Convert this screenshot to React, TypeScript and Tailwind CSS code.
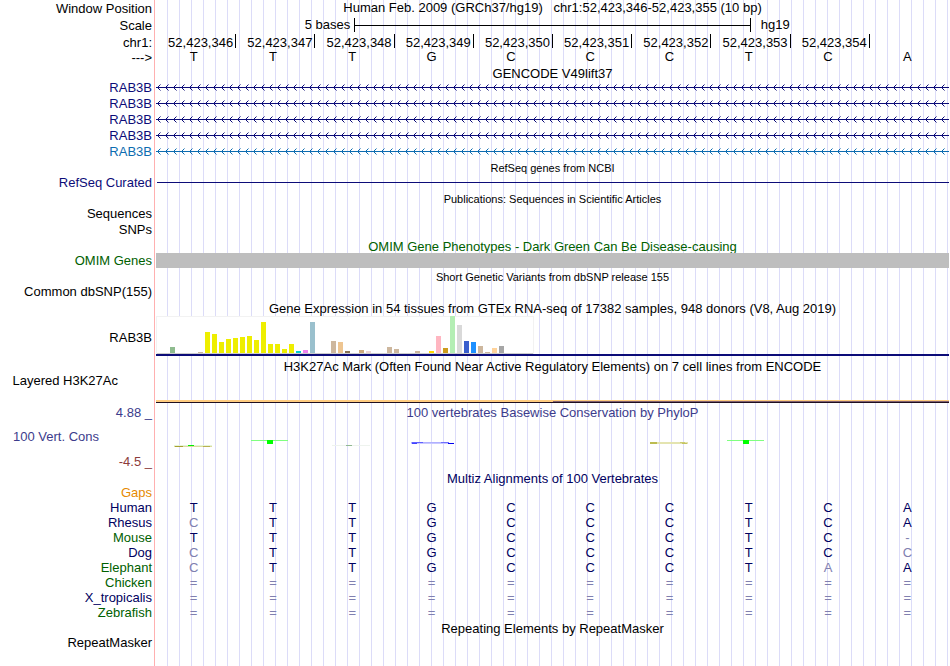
import React from "react";

const BASES = ["T", "T", "T", "G", "C", "C", "C", "T", "C", "A"];

const POSITIONS = [
  "52,423,346",
  "52,423,347",
  "52,423,348",
  "52,423,349",
  "52,423,350",
  "52,423,351",
  "52,423,352",
  "52,423,353",
  "52,423,354",
];

const YELLOW = "#eeee00";
const TAN = "#cdb79e";

// [tissue index, bar height, color]
const GTEX: [number, number, string][] = [
  [2, 6, "#8fbc8f"],
  [6, 1, TAN],
  [7, 21, YELLOW],
  [8, 19, YELLOW],
  [9, 11, YELLOW],
  [10, 14, YELLOW],
  [11, 15, YELLOW],
  [12, 16, YELLOW],
  [13, 17, YELLOW],
  [14, 13, YELLOW],
  [15, 31, YELLOW],
  [16, 9, YELLOW],
  [17, 9, YELLOW],
  [18, 4, YELLOW],
  [19, 9, YELLOW],
  [20, 2, "#00cdcd"],
  [21, 3, "#ee82ee"],
  [22, 31, "#9ac0cd"],
  [25, 12, TAN],
  [26, 11, "#eec591"],
  [27, 2, "#8b7355"],
  [29, 3, "#cdaa7d"],
  [30, 2, "#eed5d2"],
  [33, 6, TAN],
  [34, 4, TAN],
  [37, 2, TAN],
  [39, 2, "#ffd700"],
  [40, 17, "#ffb6c1"],
  [41, 5, "#cd9b1d"],
  [42, 37, "#b4eeb4"],
  [43, 28, "#d9d9d9"],
  [44, 12, "#3a5fcd"],
  [45, 11, "#1e90ff"],
  [46, 7, TAN],
  [47, 1, TAN],
  [48, 5, "#ffd39b"],
  [49, 7, "#a6a6a6"],
];

interface Species {
  name: string;
  green?: boolean;
  seq: string;
}

const SPECIES: Species[] = [
  { name: "Human", seq: "TTTGCCCTCA" },
  { name: "Rhesus", seq: "CTTGCCCTCA" },
  { name: "Mouse", green: true, seq: "TTTGCCCTC-" },
  { name: "Dog", seq: "CTTGCCCTCC" },
  { name: "Elephant", green: true, seq: "CTTGCCCTAA" },
  { name: "Chicken", green: true, seq: "==========" },
  { name: "X_tropicalis", seq: "==========" },
  { name: "Zebrafish", green: true, seq: "==========" },
];

interface RowProps {
  label?: string;
  labelClass?: string;
  className?: string;
  children?: React.ReactNode;
}

function Row({ label, labelClass = "", className = "h-4", children }: RowProps) {
  return (
    <div className={`flex ${className}`}>
      <div className={`flex w-[156px] shrink-0 items-center justify-end pr-1 ${labelClass}`}>
        {label}
      </div>
      <div className="min-w-0 flex-1">{children}</div>
    </div>
  );
}

function Title({ children, className = "" }: { children: React.ReactNode; className?: string }) {
  return (
    <h2 className={`ml-[156px] h-[15px] text-center leading-[18px] ${className}`}>{children}</h2>
  );
}

function SmallTitle({ children }: { children: React.ReactNode }) {
  return <h2 className="ml-[156px] h-[15px] text-center text-[11px] leading-4">{children}</h2>;
}

function Transcript({ id, color }: { id: string; color: string }) {
  return (
    <svg className="block h-4 w-full" shapeRendering="crispEdges">
      <defs>
        <pattern id={id} width="8" height="16" patternUnits="userSpaceOnUse">
          <g fill={color}>
            <rect x="2" y="6" width="1" height="1" />
            <rect x="2" y="8" width="1" height="1" />
            <rect x="3" y="5" width="1" height="1" />
            <rect x="3" y="9" width="1" height="1" />
            <rect x="0" y="7" width="8" height="1" />
          </g>
          <g fill={color} opacity="0.5">
            <rect x="4" y="4" width="1" height="1" />
            <rect x="4" y="10" width="1" height="1" />
          </g>
        </pattern>
      </defs>
      <rect width="100%" height="16" fill={`url(#${id})`} />
    </svg>
  );
}

function GtexChart() {
  return (
    <div className="h-[40px] border-b-2 border-[#0c0c78]">
      <svg width="378" height="38" className="block" shapeRendering="crispEdges">
        <rect x="0" y="0" width="378" height="38" fill="#f2f2f2" />
        <rect x="1" y="1" width="376" height="36" fill="#fff" />
        <rect x="1" y="37" width="376" height="1" fill="#ccc" />
        {GTEX.map(([i, h, color]) => (
          <rect key={i} x={i * 7} y={37 - h} width="5" height={h} fill={color} />
        ))}
      </svg>
    </div>
  );
}

function ConsGlyph({ index }: { index: number }) {
  switch (index) {
    case 0:
      return (
        <>
          <rect x="2" y="5" width="38" height="1" fill="#e6f5d8" />
          <rect x="2" y="6" width="38" height="1" fill="#dcdca0" />
          <rect x="3" y="6" width="8" height="1" fill="#a8a030" />
          <rect x="31" y="6" width="7" height="1" fill="#b8b050" />
          <rect x="16" y="5" width="6" height="1" fill="#00f000" />
        </>
      );
    case 1:
    case 7:
      return (
        <>
          <rect x="0" y="0" width="37" height="1" fill="#80ff80" />
          <rect x="16" y="0" width="6" height="4" fill="#00ff00" />
        </>
      );
    case 2:
      return (
        <>
          <rect x="2" y="5" width="38" height="1" fill="#eef3ee" />
          <rect x="16" y="5" width="6" height="1" fill="#90b890" />
        </>
      );
    case 3:
      return (
        <>
          <rect x="1" y="2" width="38" height="1" fill="#b0b0ff" />
          <rect x="1" y="3" width="43" height="1" fill="#c8c8ff" />
          <rect x="2" y="2" width="11" height="1" fill="#6060ff" />
          <rect x="2" y="3" width="5" height="1" fill="#4040ff" />
          <rect x="31" y="2" width="8" height="1" fill="#7070ff" />
          <rect x="38" y="3" width="6" height="1" fill="#0000f0" />
        </>
      );
    case 6:
      return (
        <>
          <rect x="3" y="2" width="38" height="2" fill="#e4e4b0" />
          <rect x="3" y="2" width="7" height="2" fill="#bcbc50" />
          <rect x="33" y="2" width="5" height="1" fill="#cccc70" />
          <rect x="35" y="3" width="5" height="1" fill="#c4c460" />
        </>
      );
    default:
      return null;
  }
}

export default function App() {
  return (
    <main className="relative flex min-h-screen flex-col bg-white pr-px font-['Liberation_Sans',Arial,sans-serif] text-[13px] leading-4 text-black">
      <div className="absolute inset-y-0 left-[154px] right-px border-l border-[#ffb0b0] bg-[repeating-linear-gradient(90deg,transparent_0_11px,#dcdcf8_11px_12px)] bg-clip-content bg-origin-content pl-px" />

      <div className="relative">
        <Row label="Window Position" labelClass="pt-0.5">
          <h1 className="whitespace-pre text-center">
            {"Human Feb. 2009 (GRCh37/hg19)   chr1:52,423,346-52,423,355 (10 bp)"}
          </h1>
        </Row>
        <Row label="Scale" labelClass="pt-0.5" className="h-[18px]">
          <div className="grid h-full grid-cols-4 items-center">
            <span className="pr-1 text-right">5 bases</span>
            <div className="col-span-2 flex h-3.5 items-center border-x border-black">
              <div className="h-px w-full bg-black" />
            </div>
            <span className="pl-2.5">hg19</span>
          </div>
        </Row>
        <Row label="chr1:" labelClass="pt-0.5" className="h-[15px]">
          <div className="ml-px grid h-full grid-cols-10 leading-[18px]">
            {POSITIONS.map((pos) => (
              <div key={pos} className="h-3.5 border-r border-black pr-0.5 text-right">
                {pos}
              </div>
            ))}
          </div>
        </Row>
        <Row label="--->" labelClass="pt-0.5">
          <div className="grid h-full grid-cols-10 text-center">
            {BASES.map((base, i) => (
              <span key={i} className="pr-1">
                {base}
              </span>
            ))}
          </div>
        </Row>

        <Title>GENCODE V49lift37</Title>
        {["t1", "t2", "t3", "t4"].map((id) => (
          <Row key={id} label="RAB3B" labelClass="text-[#0c0c78]">
            <Transcript id={id} color="#0c0c78" />
          </Row>
        ))}
        <Row label="RAB3B" labelClass="text-[#0c6cb0]">
          <Transcript id="t5" color="#0c6cb0" />
        </Row>

        <SmallTitle>RefSeq genes from NCBI</SmallTitle>
        <Row label="RefSeq Curated" labelClass="text-[#0c0c78]">
          <div className="ml-px h-2 border-b border-[#0c0c78]" />
        </Row>

        <SmallTitle>Publications: Sequences in Scientific Articles</SmallTitle>
        <Row label="Sequences" />
        <Row label="SNPs" />

        <Title className="text-[#006000]">
          OMIM Gene Phenotypes - Dark Green Can Be Disease-causing
        </Title>
        <Row label="OMIM Genes" labelClass="text-[#006000]">
          <div className="relative h-[15px] bg-[#bebebe]" />
        </Row>

        <SmallTitle>Short Genetic Variants from dbSNP release 155</SmallTitle>
        <Row label="Common dbSNP(155)" />

        <Title>
          Gene Expression in 54 tissues from GTEx RNA-seq of 17382 samples, 948 donors (V8, Aug 2019)
        </Title>
        <Row label="RAB3B" labelClass="pt-0.5" className="h-[43px]">
          <div className="pt-px">
            <GtexChart />
          </div>
        </Row>

        <Title>
          H3K27Ac Mark (Often Found Near Active Regulatory Elements) on 7 cell lines from ENCODE
        </Title>
        <Row label="Layered H3K27Ac" labelClass="h-4 pr-[38px]" className="h-[30px]">
          <div className="flex h-[30px] flex-col justify-end">
            <div className="h-0.5 bg-[#ffcc80]">
              <div className="ml-[50%] h-full border-b border-[#806070]" />
            </div>
            <div className="h-px bg-[#201020]" />
          </div>
        </Row>

        <Row label="4.88 _" labelClass="text-[#3c3c8c]" className="h-[18px] pt-0.5">
          <h2 className="text-center text-[#3c3c8c]">
            100 vertebrates Basewise Conservation by PhyloP
          </h2>
        </Row>
        <div className="flex h-[49px]">
          <div className="flex w-[156px] shrink-0 flex-col justify-between pl-[13px] pr-1 pt-2">
            <span className="text-[#3c3c8c]">100 Vert. Cons</span>
            <span className="text-right text-[#8c3c3c]">-4.5 _</span>
          </div>
          <div className="grid flex-1 grid-cols-10 pt-[19px]">
            {BASES.map((_, i) => (
              <div key={i} className="flex justify-center pr-1">
                <svg width="44" height="8" shapeRendering="crispEdges">
                  <ConsGlyph index={i} />
                </svg>
              </div>
            ))}
          </div>
        </div>

        <Title className="text-[#000060]">Multiz Alignments of 100 Vertebrates</Title>
        <Row label="Gaps" labelClass="text-[#e68a00]" className="h-[15px]" />
        <table className="w-full table-fixed border-collapse leading-[15px]">
          <tbody>
            {SPECIES.map((sp) => (
              <tr key={sp.name} className="h-[15px]">
                <th
                  scope="row"
                  className={`w-[156px] p-0 pr-1 text-right font-normal ${
                    sp.green ? "text-[#006000]" : "text-[#000060]"
                  }`}
                >
                  {sp.name}
                </th>
                {sp.seq.split("").map((base, i) => (
                  <td
                    key={i}
                    className={`p-0 pr-1 text-center ${
                      base === BASES[i] ? "text-[#000060]" : "text-[#8080b0]"
                    }`}
                  >
                    {base}
                  </td>
                ))}
              </tr>
            ))}
          </tbody>
        </table>

        <Title>Repeating Elements by RepeatMasker</Title>
        <Row label="RepeatMasker" />
      </div>
    </main>
  );
}
